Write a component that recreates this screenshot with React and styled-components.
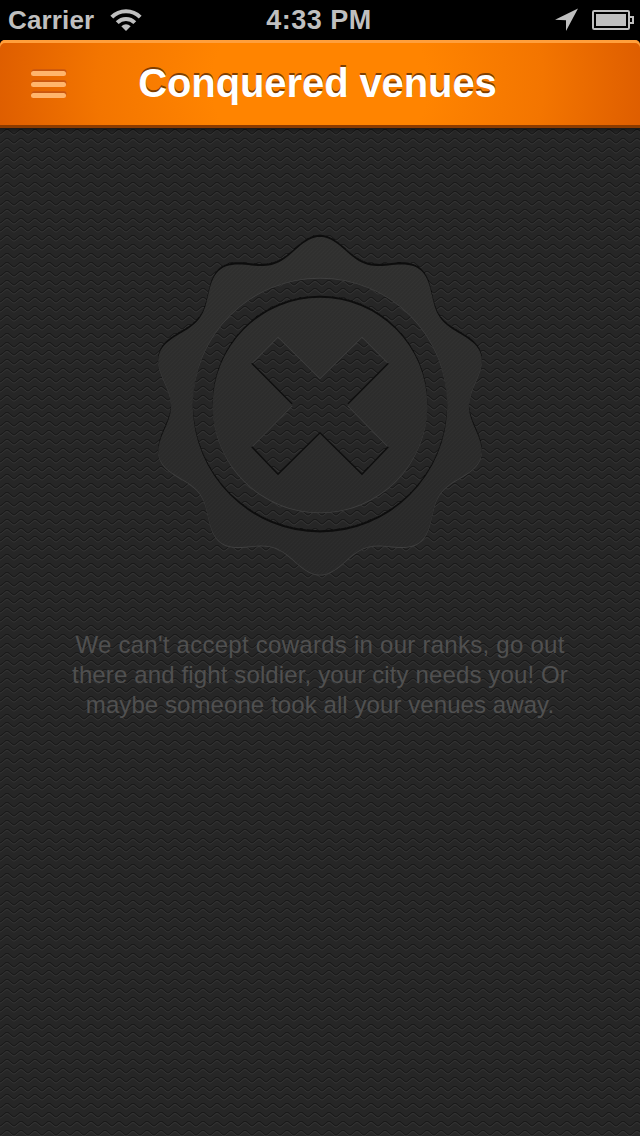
import React from "react";
import styled, { createGlobalStyle } from "styled-components";

const GlobalStyle = createGlobalStyle`
  html, body { margin: 0; padding: 0; background: #000; }
  #root { display: flex; }
`;

const Screen = styled.div`
  display: flex;
  flex-direction: column;
  width: 640px;
  height: 1136px;
  overflow: hidden;
  background: #000;
  font-family: "Liberation Sans", Helvetica, Arial, sans-serif;
`;

const StatusBar = styled.div`
  display: grid;
  grid-template-columns: 1fr auto 1fr;
  align-items: center;
  flex: none;
  height: 40px;
  padding: 0 6px 0 8px;
  color: #bfbfbf;
  font-size: 26px;
  font-weight: bold;
  line-height: 40px;
`;

const StatusGroup = styled.div`
  display: flex;
  align-items: center;
  justify-content: ${(p) => (p.$end ? "flex-end" : "flex-start")};
  gap: ${(p) => (p.$end ? 13 : 16)}px;
  height: 40px;
  svg { display: block; }
`;

const Carrier = styled.span`
  letter-spacing: 0.15px;
`;

const Clock = styled.span`
  margin-right: 4px;
  font-size: 27px;
  letter-spacing: 0.5px;
`;

const NavBar = styled.header`
  display: grid;
  grid-template-columns: 66px 1fr 71px;
  align-items: center;
  flex: none;
  box-sizing: border-box;
  height: 88px;
  border-radius: 5px 5px 0 0;
  padding: 0 0 2px;
  background: radial-gradient(ellipse 360px 300px at 50% 50%, #ff8400 0%, #ff8400 30%, #f37500 62%, #dc5b00 93%);
  box-shadow: inset 0 3px 0 #ff9f3c, inset 0 -3px 0 #8b3b00;
`;

const MenuButton = styled.button`
  display: flex;
  flex-direction: column;
  gap: 6px;
  width: 35px;
  margin: 3px 0 0 31px;
  padding: 0;
  border: 0;
  background: none;
`;

const MenuBar = styled.span`
  height: 5px;
  border-radius: 2.5px;
  background: #ffb56c;
  box-shadow: 0.5px -1.8px 0 #c9560f;
`;

const Title = styled.h1`
  margin: 0;
  color: #fff;
  font-size: 40px;
  line-height: 48px;
  letter-spacing: -0.1px;
  text-align: center;
  white-space: nowrap;
  text-shadow: 0 -2px 0 #7f3e00;
`;

const Content = styled.main`
  display: grid;
  flex: 1;
  background: #262626;
`;

const Layer = styled.div`
  grid-area: 1 / 1;
  min-width: 0;
`;

const EmptyState = styled(Layer)`
  display: flex;
  flex-direction: column;
  align-items: center;
  padding-top: 102px;
  position: relative;
`;

const Message = styled.p`
  margin: 50px 0 0;
  color: #505050;
  font-size: 24px;
  line-height: 30px;
  text-align: center;
`;

const Line = styled.span`
  display: block;
  white-space: nowrap;
  letter-spacing: ${(p) => p.$track}px;
`;

const rows = [0, 9, 18, 27, 35, 44, 53];

function Texture() {
  return (
    <svg width="640" height="1008" style={{ display: "block" }}>
      <defs>
        <pattern id="waves" width="14" height="62" patternUnits="userSpaceOnUse">
          {rows.map((y) => (
            <g key={y} fill="none" strokeLinejoin="round">
              <path d={`M-1 ${y + 5.6} L0 ${y + 5.8} L1 ${y + 5.6} L6 ${y + 1.5} H8 L13 ${y + 5.6} L14 ${y + 5.8} L15 ${y + 5.6}`} stroke="#191919" strokeWidth="1.2" />
              <path d={`M-1 ${y + 6.8} L0 ${y + 7} L1 ${y + 6.8} L6 ${y + 2.7} H8 L13 ${y + 6.8} L14 ${y + 7} L15 ${y + 6.8}`} stroke="#343434" strokeWidth="0.9" />
            </g>
          ))}
        </pattern>
        <linearGradient id="barShadow" x1="0" y1="0" x2="0" y2="1">
          <stop offset="0" stopColor="#000" stopOpacity=".35" />
          <stop offset="1" stopColor="#000" stopOpacity="0" />
        </linearGradient>
      </defs>
      <rect width="640" height="1008" fill="url(#waves)" />
      <rect width="640" height="5" fill="url(#barShadow)" />
    </svg>
  );
}

function sealOutline(cx, cy) {
  const points = [];
  for (let i = 0; i < 360; i++) {
    const a = (i * Math.PI) / 180;
    const r = 158.4 + 10 * Math.cos(10 * a) + 0.5 * Math.cos(20 * a);
    points.push(`${(cx + r * Math.sin(a)).toFixed(2)} ${(cy - r * Math.cos(a)).toFixed(2)}`);
  }
  return `M${points.join("L")}Z`;
}

const circle = (cx, cy, r) =>
  `M${cx - r} ${cy}a${r} ${r} 0 1 0 ${2 * r} 0a${r} ${r} 0 1 0 ${-2 * r} 0Z`;

const sealPath = [
  sealOutline(180, 175),
  circle(180, 174.3, 127.3),
  circle(180, 174.3, 107.3),
  "M138 106L180 147.5L222 106L248.8 133L207.5 174.5L248.8 216.5L222 244.5L180 203L138 244.5L111.2 216.5L152.5 174.5L111.2 133Z",
].join("");

function Seal() {
  return (
    <svg width="360" height="350" viewBox="0 0 360 350" style={{ display: "block" }}>
      <defs>
        <linearGradient id="sealFill" x1="0" y1="0" x2="0" y2="1">
          <stop offset="0" stopColor="#30302f" />
          <stop offset="1" stopColor="#282828" />
        </linearGradient>
        <pattern id="grain" width="4" height="4" patternUnits="userSpaceOnUse">
          <path d="M-1 5L5 -1M-1 1L1 -1M3 5L5 3" stroke="#fff" strokeOpacity=".025" strokeWidth="1" />
        </pattern>
        <filter id="soft" x="-5%" y="-5%" width="110%" height="110%">
          <feGaussianBlur stdDeviation="0.6" />
        </filter>
      </defs>
      <g fillRule="evenodd">
        <path d={sealPath} transform="translate(0 1.7)" fill="#3f3f3f" />
        <path d={sealPath} transform="translate(0 -1.3)" fill="#0d0d0d" filter="url(#soft)" />
        <path d={sealPath} transform="translate(0 .8)" fill="url(#sealFill)" />
        <path d={sealPath} transform="translate(0 .8)" fill="url(#grain)" />
      </g>
    </svg>
  );
}

const WifiIcon = () => (
  <svg width="32" height="24" viewBox="0 0 32 24">
    <g fill="none" stroke="#bfbfbf" strokeWidth="4">
      <path d="M1.8 9.2A20 20 0 0 1 30.2 9.2" />
      <path d="M7.2 14.6A12.4 12.4 0 0 1 24.8 14.6" />
    </g>
    <path d="M16 23L11.3 18.3Q16 14 20.7 18.3Z" fill="#bfbfbf" />
  </svg>
);

const LocationIcon = () => (
  <svg width="24" height="24" viewBox="0 0 24 24">
    <path d="M23 .5L11 23V12.2L0 11.7Z" fill="#bfbfbf" />
  </svg>
);

const BatteryIcon = () => (
  <svg width="42" height="20" viewBox="0 0 42 20">
    <rect x="1" y="1" width="36" height="18" rx="1.2" fill="none" stroke="#bfbfbf" strokeWidth="2" />
    <rect x="4" y="4" width="30" height="12" fill="#bfbfbf" />
    <path d="M38 7H41V13H38" fill="none" stroke="#bfbfbf" strokeWidth="2" />
  </svg>
);

export default function App() {
  return (
    <Screen>
      <GlobalStyle />
      <StatusBar>
        <StatusGroup>
          <Carrier>Carrier</Carrier>
          <WifiIcon />
        </StatusGroup>
        <Clock>4:33 PM</Clock>
        <StatusGroup $end>
          <LocationIcon />
          <BatteryIcon />
        </StatusGroup>
      </StatusBar>
      <NavBar>
        <MenuButton aria-label="Menu">
          <MenuBar />
          <MenuBar />
          <MenuBar />
        </MenuButton>
        <Title>Conquered venues</Title>
      </NavBar>
      <Content>
        <Layer>
          <Texture />
        </Layer>
        <EmptyState>
          <Seal />
          <Message>
            <Line $track={0.26}>We can't accept cowards in our ranks, go out</Line>
            <Line $track={0.13}>there and fight soldier, your city needs you! Or</Line>
            <Line $track={0.08}>maybe someone took all your venues away.</Line>
          </Message>
        </EmptyState>
      </Content>
    </Screen>
  );
}
